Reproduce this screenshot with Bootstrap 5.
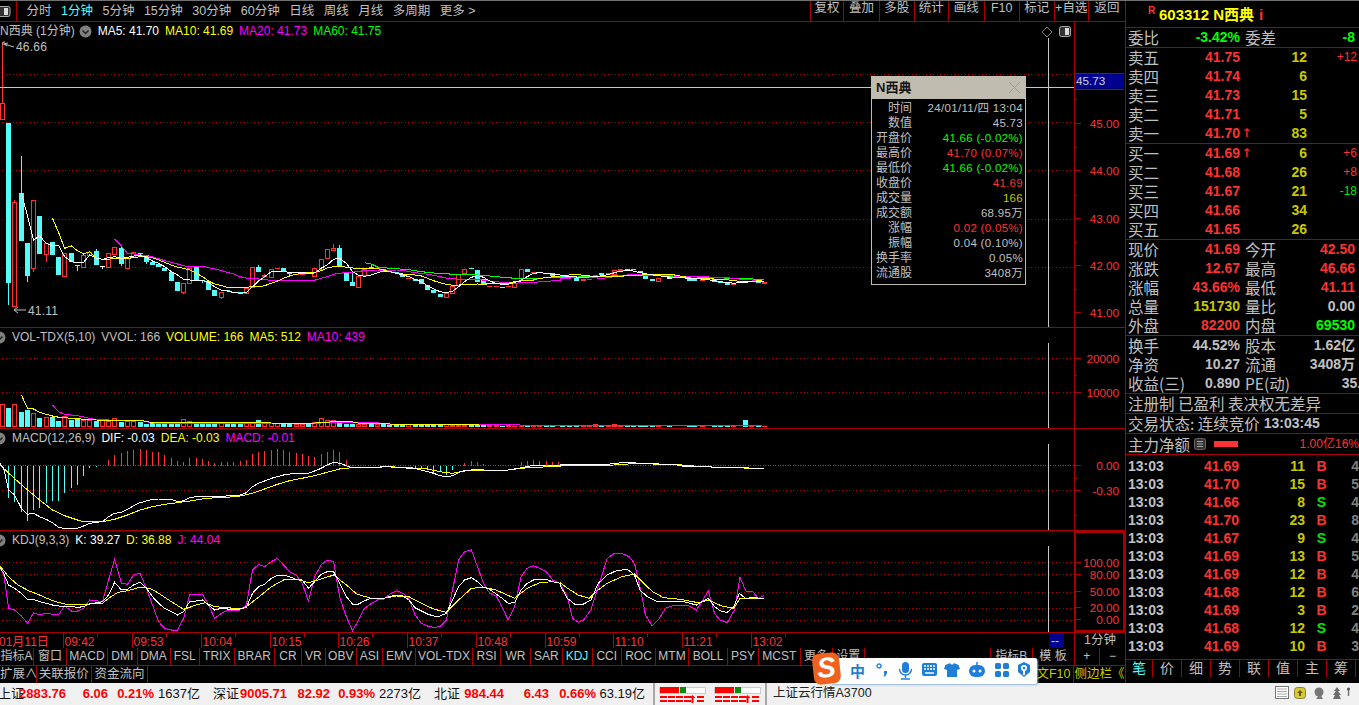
<!DOCTYPE html>
<html lang="zh">
<head>
<meta charset="UTF-8" />
<title>N西典 1分钟</title>
<link href="https://cdn.jsdelivr.net/npm/bootstrap@5.3.3/dist/css/bootstrap.min.css" rel="stylesheet">
<style>
  html, body { height: 100%; overflow: hidden; background: #000; }
  body { font: 12px/1.2 "Liberation Sans", "Noto Sans CJK SC", sans-serif; color: #c0c0c0; }
  :root { --rl: #a80000; --rd: #ff3232; }
  #app { width: 1359px; height: 705px; border-top: 1px solid #707070; overflow: hidden; }
  .left-col { width: 1126px; border-right: 1px solid var(--rl); }
  .right-col { width: 233px; }
  svg { display: block; }
  svg text { font: 12px "Liberation Sans", "Noto Sans CJK SC", sans-serif; fill: #ff3232; }

  .tool-bar { height: 21px; border-bottom: 1px solid var(--rl); font-size: 12.5px; }
  .tool-ico { width: 17px; border-right: 1px solid var(--rl); }
  .tool-left span { margin-left: 9.5px; }
  .tool-left { padding-left: 0; }
  .tool-left .on { color: #54fcfc; }
  .tool-btn { border-left: 1px solid var(--rl); text-align: center; }

  .pan { border-bottom: 1px solid var(--rl); }
  .pan-main { height: 306px; }
  .pan-vol { height: 101px; }
  .pan-macd { height: 102px; }
  .pan-kdj { height: 102px; }
  .pan-time { height: 15px; }
  .plot { width: 1074px; }
  .yaxis { width: 51px; border-left: 1px solid var(--rl); }
  .legend-row { top: 2px; left: 0; gap: 6px; line-height: 15px; white-space: nowrap; }
  .legend-row .y { color: #ffff00; } .legend-row .m { color: #ff00ff; }
  .legend-row .g { color: #00ff00; } .legend-row .w { color: #fff; }
  .legend-lead { gap: 4px; }
  .kdj-box { outline: 2px solid var(--rl); outline-offset: -2px; }
  .cell-1m { width: 51px; border-left: 1px solid var(--rl); text-align: center; line-height: 15px; font-size: 12.5px; }
  .tab-row { height: 18px; border-bottom: 1px solid var(--rl); line-height: 17px; font-size: 12px; }
  .tab-row2 { height: 17px; line-height: 17px; font-size: 12.5px; }
  .tab-cell { border-right: 1px solid var(--rl); text-align: center; white-space: nowrap; flex-shrink: 0; }
  .tab-cell.on { color: #54fcfc; }
  .tab-cell.yel { color: #c8c800; }

  .q-font { font: 15.5px/19px "Noto Sans CJK SC", sans-serif; }
  .q-sec { border-bottom: 1px solid var(--rl); padding-left: 2px; }
  .q-row { height: 19px; white-space: nowrap; }
  .q-lab { width: 34px; flex-shrink: 0; color: #c0c0c0; font: 15.5px/19px "Noto Sans CJK SC", sans-serif; }
  .q-val { font: bold 14px/19px "Liberation Sans", "Noto Sans CJK SC", sans-serif; text-align: right; flex-shrink: 0; }
  .w78 { width: 78px; } .w79 { width: 79px; } .w54 { width: 54px; } .w50 { width: 50px; } .w13 { width: 13px; }
  .gap5 { margin-left: 5px; }
  .q-del { font: 12px/19px "Liberation Sans", sans-serif; text-align: right; flex-shrink: 0; }
  .q-arrow { font: bold 12px/19px "DejaVu Sans", sans-serif; color: #ff2020; text-align: center; }
  .c-red { color: #ff3232; } .c-yel { color: #c8c800; } .c-grn { color: #00e600; } .c-gry { color: #c0c0c0; }
  .c-lgrn { color: #00ff00; } .c-dim { color: #808080; }
  .q-head { height: 27px; font: bold 15px/27px "Liberation Sans", "Noto Sans CJK SC", sans-serif; color: #ffff00; padding-left: 22px; }
  .q-r { font-size: 10px; color: #ff3232; position: relative; top: -4px; width: 11px; }
  .q-i { color: #ff3232; margin-left: 5px; }
  .q-h20 { height: 20px; }
  .q-h21 { height: 21px; }
  .q-flow { line-height: 19px; }
  .tick-box { height: 205px; padding-top: 2px; }
  .tick-row { height: 18px; font: bold 14px/18px "Liberation Sans", sans-serif; white-space: nowrap; }
  .t-time { width: 37px; color: #c0c0c0; }
  .t-price { width: 74px; text-align: right; color: #ff3232; }
  .t-qty { width: 66px; text-align: right; color: #c8c800; }
  .t-bs { width: 17px; margin-left: 8px; text-align: center; }
  .t-n { width: 29px; text-align: right; color: #808080; }
  .tab-q { height: 17px; line-height: 17px; font-size: 14px; }
  .tab-q .tab-cell { width: 29px; }
  .tab-q .tab-cell:first-child { width: 27px; }

  .pop-box { left: 871px; top: 75px; width: 155px; height: 209px; background: #000; border: 1px solid #c0bcb0; }
  .pop-title { height: 22px; background: #c0bcb0; color: #141414; font-weight: bold; font-size: 13px; line-height: 22px; padding-left: 4px; }
  .pop-list { padding-top: 2px; }
  .pop-row { height: 15px; line-height: 15px; white-space: nowrap; padding-right: 2px; }
  .pop-lab { width: 40px; text-align: right; font-size: 12px; color: #c0c0c0; }
  .pop-val { font-size: 11.5px; letter-spacing: .3px; }

  .status-bar { height: 22px; background: #f0f0f0; color: #111; line-height: 21px; white-space: nowrap; }
  .st-cell { flex-shrink: 0; font-size: 13px; }
  .st-red { color: #f00; font-weight: bold; text-align: right; font-size: 13px; }
  .st-sep { border-left: 2px solid #a8a8a8; height: 22px; }
  .st-note { color: #222; font-size: 12.5px; margin-left: 6px; }
  .st-tray { right: 6px; top: 3px; }

  .sg-bar { left: 830px; top: 657px; width: 207px; height: 26px; background: #fff; border-radius: 2px; box-shadow: 1px 1px 2px #8fb7df; }
  .sg-logo { left: 813px; top: 652px; width: 27px; height: 31px; background: #f0611e; border-radius: 7px; transform: rotate(-6deg); color: #fff; font: italic bold 28px/30px "Liberation Sans", sans-serif; text-align: center; }
  .sg-zh { left: 850px; top: 662px; color: #1f7ed8; font: bold 15px/16px "Noto Sans CJK SC", sans-serif; }
  .sg-ico { left: 876px; top: 661px; }
</style>
</head>
<body>
<div id="app" class="position-relative">
  <div class="d-flex">
    <div class="left-col flex-shrink-0">
      <!-- 顶部周期栏 -->
      <div class="tool-bar d-flex">
        <div class="tool-ico flex-shrink-0 d-flex align-items-center">
          <svg width="11" height="11"><rect x="-2" y="0.5" width="12" height="10" rx="2" fill="#333" stroke="#aaa"/><rect x="4" y="2" width="4" height="7" fill="#ddd"/></svg>
        </div>
        <div class="tool-left flex-grow-1 d-flex align-items-center" id="toolLeft"></div>
        <div class="d-flex" id="toolRight"></div>
      </div>

      <!-- 主图 -->
      <div class="pan pan-main d-flex">
        <div class="plot position-relative">
          <svg id="svgMain" width="1074" height="305" viewBox="0 22 1074 305"></svg>
          <div class="legend-row position-absolute d-flex align-items-center">
            <div class="d-flex align-items-center legend-lead">
              <span class="leg-name">N西典 (1分钟)</span>
              <svg width="13" height="13" viewBox="0 0 13 13"><circle cx="6.5" cy="6.5" r="6" fill="#808080"/><path d="M3.5 5.5l3 3 3-3" fill="none" stroke="#222" stroke-width="1.5"/></svg>
            </div>
            <span class="w">MA5: 41.70</span><span class="y">MA10: 41.69</span><span class="m">MA20: 41.73</span><span class="g">MA60: 41.75</span>
          </div>
        </div>
        <svg class="yaxis" id="axMain" width="51" height="305" viewBox="1075 22 51 305"></svg>
      </div>

      <!-- 成交量 -->
      <div class="pan pan-vol d-flex">
        <div class="plot position-relative">
          <svg id="svgVol" width="1074" height="100" viewBox="0 328 1074 100"></svg>
          <div class="legend-row position-absolute d-flex align-items-center">
            <svg width="6" height="13" viewBox="7 0 6 13"><circle cx="6.5" cy="6.5" r="6" fill="#808080"/><path d="M3.5 5.5l3 3 3-3" fill="none" stroke="#222" stroke-width="1.5"/></svg>
            <span>VOL-TDX(5,10)</span><span>VVOL: 166</span><span class="y">VOLUME: 166</span><span class="y">MA5: 512</span><span class="m">MA10: 439</span>
          </div>
        </div>
        <svg class="yaxis" id="axVol" width="51" height="100" viewBox="1075 328 51 100"></svg>
      </div>

      <!-- MACD -->
      <div class="pan pan-macd d-flex">
        <div class="plot position-relative">
          <svg id="svgMacd" width="1074" height="101" viewBox="0 429 1074 101"></svg>
          <div class="legend-row position-absolute d-flex align-items-center">
            <svg width="6" height="13" viewBox="7 0 6 13"><circle cx="6.5" cy="6.5" r="6" fill="#808080"/><path d="M3.5 5.5l3 3 3-3" fill="none" stroke="#222" stroke-width="1.5"/></svg>
            <span>MACD(12,26,9)</span><span class="w">DIF: -0.03</span><span class="y">DEA: -0.03</span><span class="m">MACD: -0.01</span>
          </div>
        </div>
        <svg class="yaxis" id="axMacd" width="51" height="101" viewBox="1075 429 51 101"></svg>
      </div>

      <!-- KDJ -->
      <div class="pan pan-kdj d-flex">
        <div class="plot position-relative">
          <svg id="svgKdj" width="1074" height="101" viewBox="0 531 1074 101"></svg>
          <div class="legend-row position-absolute d-flex align-items-center">
            <svg width="6" height="13" viewBox="7 0 6 13"><circle cx="6.5" cy="6.5" r="6" fill="#808080"/><path d="M3.5 5.5l3 3 3-3" fill="none" stroke="#222" stroke-width="1.5"/></svg>
            <span>KDJ(9,3,3)</span><span class="w">K: 39.27</span><span class="y">D: 36.88</span><span class="m">J: 44.04</span>
          </div>
        </div>
        <svg class="yaxis kdj-box" id="axKdj" width="51" height="101" viewBox="1075 531 51 101"></svg>
      </div>

      <!-- 时间轴 -->
      <div class="pan-time d-flex">
        <svg id="svgTime" width="1074" height="15" viewBox="0 633 1074 15"></svg>
        <div class="cell-1m">1分钟</div>
      </div>

      <div class="tab-row d-flex border-top-0" id="tabsA"></div>
      <div class="tab-row2 d-flex" id="tabsB"></div>
    </div>

    <!-- 右侧盘口 -->
    <div class="right-col flex-shrink-0">
      <div class="q-sec q-head d-flex">
        <span class="q-r">R</span><span>603312 N西典</span><span class="q-i">i</span>
      </div>
      <div class="q-sec q-h20" id="qBi"></div>
      <div class="q-sec" id="qSell"></div>
      <div class="q-sec" id="qBuy"></div>
      <div class="q-sec" id="qQuote"></div>
      <div class="q-sec" id="qFin"></div>
      <div class="q-sec q-h20 q-font">注册制 已盈利 表决权无差异</div>
      <div class="q-sec q-h20 d-flex">
        <span class="q-font">交易状态: 连续竞价</span>
        <span class="q-val ms-1 c-gry">13:03:45</span>
      </div>
      <div class="q-sec q-h21 d-flex align-items-center position-relative">
        <span class="q-font">主力净额</span>
        <svg class="ms-1" width="12" height="12" viewBox="0 0 12 12"><rect x=".5" y=".5" width="11" height="11" rx="2" fill="#333" stroke="#666"/><path d="M3 3.5h6M3 6h6M3 8.5h6" stroke="#aaa"/></svg>
        <svg class="ms-2" width="26" height="6"><rect x="0" width="24" height="6" fill="#ff3232"/></svg>
        <span class="ms-auto c-red q-main-a">1.00亿</span>
        <span class="c-red q-main-b">16%</span>
      </div>
      <div class="q-sec tick-box" id="qTicks"></div>
      <div class="tab-q d-flex" id="tabsQ"></div>
    </div>
  </div>

  <!-- 底部状态栏 -->
  <div class="status-bar d-flex position-relative" id="statusBar"></div>

  <!-- 十字光标数据窗 -->
  <div class="pop-box position-absolute" id="popBox">
    <div class="pop-title d-flex justify-content-between">
      <span>N西典</span>
      <svg class="me-1 mt-1" width="13" height="13"><path d="M1 1l11 11M12 1L1 12" stroke="#a09c92"/></svg>
    </div>
    <div class="pop-list" id="popList"></div>
  </div>

  <!-- 输入法状态条 -->
  <div class="sg-bar position-absolute"></div>
  <div class="sg-logo position-absolute">S</div>
  <div class="sg-zh position-absolute">中</div>
  <svg class="sg-ico position-absolute" width="160" height="18" viewBox="0 0 160 18" fill="#1f7ed8">
    <circle cx="3" cy="4" r="2" fill="none" stroke="#1f7ed8" stroke-width="1.3"/>
    <path d="M8 9h3v2.500l-2 3h-1.500l1-3H8z"/>
    <rect x="26" y="0" width="7" height="11" rx="3.500"/>
    <path d="M23.500 7a6 6 0 0 0 12 0M29.500 13v3M25 17h9" fill="none" stroke="#1f7ed8" stroke-width="1.400"/>
    <rect x="46" y="1" width="15" height="13" rx="2"/>
    <path d="M48 4h2M51 4h2M54 4h2M57 4h2M48 7h2M51 7h2M54 7h2M57 7h2M49 11h9" stroke="#fff" stroke-width="1.300"/>
    <path d="M74 1l-4.500 2-1.500 4 3 1v7h10V8l3-1-1.500-4L78 1c-.5 2-3.500 2-4 0z"/>
    <rect x="93" y="3" width="16" height="12" rx="6"/>
    <path d="M101 3V0" stroke="#1f7ed8" stroke-width="1.500"/>
    <circle cx="98" cy="9" r="1.500" fill="#fff"/><circle cx="104" cy="9" r="1.500" fill="#fff"/>
    <rect x="119" y="1" width="6" height="6" rx="1.500"/><rect x="127" y="1" width="6" height="6" rx="1.500"/>
    <rect x="119" y="9" width="6" height="6" rx="1.500"/><rect x="127" y="9" width="6" height="6" rx="1.500"/>
    <path d="M148 0l6 3v7l-6 5-6-5V3z"/>
    <circle cx="148" cy="6" r="3" fill="#fff"/><path d="M147 7h2v6h-2z" fill="#fff"/><circle cx="148" cy="6" r="1.300"/>
  </svg>
</div>

<script src="https://cdn.jsdelivr.net/npm/bootstrap@5.3.3/dist/js/bootstrap.bundle.min.js"></script>
<script>
  const RED = "#ff3232", CYAN = "#54fcfc", DOT = "#b00000", CROSS = "#c8c8c8";

  // 读图坐标: 左半 2.8 倍, 右半 2.75 倍, 纵向 3 倍
  const xA = x => +(x / 2.8).toFixed(1);
  const xB = x => +(560 + x / 2.75).toFixed(1);

  function pts(a, b, y0) {
    const out = [];
    for (let i = 0; i < a.length; i += 2) out.push(xA(a[i]) + "," + (y0 + a[i + 1] / 3).toFixed(1));
    for (let i = 0; b && i < b.length; i += 2) out.push(xB(b[i]) + "," + (y0 + b[i + 1] / 3).toFixed(1));
    return out.join(" ");
  }
  const line = (p, c, w) => `<polyline points="${p}" fill="none" stroke="${c}" stroke-width="${w || 1}" shape-rendering="crispEdges"/>`;
  const rect = (x, y, w, h, f, s) => `<rect x="${x}" y="${y}" width="${w}" height="${h}" fill="${f}" ${s ? `stroke="${s}"` : ""} shape-rendering="crispEdges"/>`;
  const seg = (x1, y1, x2, y2, c) => `<line x1="${x1}" y1="${y1}" x2="${x2}" y2="${y2}" stroke="${c}" shape-rendering="crispEdges"/>`;
  const dotted = y => `<line x1="2" y1="${y}" x2="1074" y2="${y}" stroke="${DOT}" stroke-dasharray="1 2.500" shape-rendering="crispEdges"/>`;

  // [x, 实体上, 实体下, 上影, 下影, 类型]
  const candles = [
    [7,310,358,125,358,"r"],[24,370,850,370,915,"c"],[41,607,917,600,917,"r"],[60,580,722,468,722,"c"],
    [77,730,827,730,845,"c"],[94,601,803,601,815,"r"],[111,648,762,648,762,"c"],[129,730,762,730,785,"r"],
    [147,727,765,727,765,"c"],[164,772,825,772,825,"c"],[181,760,827,760,827,"r"],[200,758,787,758,787,"c"],
    [217,795,797,795,812,"c"],[234,765,800,765,800,"r"],[251,755,765,755,765,"r"],[270,753,795,748,795,"c"],
    [287,798,800,798,808,"w"],[304,760,800,760,800,"r"],[321,742,762,742,762,"r"],[340,745,793,737,798,"c"],
    [357,775,803,775,803,"r"],[374,757,772,757,772,"r"],[392,758,762,758,766,"c"],[410,765,787,765,792,"c"],
    [427,786,795,786,795,"c"],[444,792,800,792,800,"c"],[461,803,812,803,812,"c"],[480,815,843,815,843,"c"],
    [497,846,872,846,872,"c"],[514,850,875,850,882,"r"],[531,805,848,805,848,"r"],[550,800,842,800,842,"c"],
    [567,840,843,840,850,"c"],[584,845,870,845,870,"c"],[601,870,888,870,888,"c"],[620,877,892,877,897,"r"],
    [637,870,873,870,873,"c"],[654,875,877,875,877,"c"],[672,877,880,877,880,"c"],[690,865,880,865,880,"r"],
    [707,802,862,802,862,"r"],[724,802,815,796,815,"c"],[741,826,830,822,835,"R"],[760,808,830,808,830,"r"],
    [777,803,806,803,806,"R"],[794,805,815,805,815,"c"],[811,818,822,818,827,"c"],[829,822,825,822,825,"R"],
    [846,820,824,820,824,"R"],[864,818,823,818,823,"c"],[881,805,827,805,827,"r"],[899,778,808,778,808,"r"],
    [916,748,775,748,775,"r"],[934,743,751,732,751,"r"],[951,745,798,736,798,"c"],[970,817,843,817,843,"c"],
    [987,847,857,820,857,"c"],[1004,828,860,828,863,"r"],[1021,808,825,808,825,"r"],[1040,800,808,792,808,"c"],
    [1057,803,805,803,805,"R"],[1074,806,812,806,812,"c"],[1091,812,815,812,815,"c"],[1110,815,820,815,820,"c"],
    [1128,822,832,822,832,"c"],[1145,834,838,834,838,"R"],[1162,838,842,838,842,"c"],[1180,838,852,838,852,"c"],
    [1197,855,870,855,870,"c"],[1214,870,878,870,878,"c"],[1232,882,891,882,891,"c"],[1250,880,892,880,892,"r"],
    [1267,857,880,857,880,"r"],[1284,822,855,822,855,"r"],[1301,808,820,808,820,"r"],[1320,805,808,805,808,"c"],
    [1337,810,845,810,845,"c"],[1354,836,855,836,855,"c"],[1371,858,862,858,862,"R"],[1389,858,862,858,862,"R"],
    [1406,860,862,860,862,"c"],[1423,858,861,858,861,"R"],[1441,850,862,850,862,"r"],[1459,808,835,808,835,"r"],
    [1476,806,815,806,815,"c"],[1494,816,820,816,820,"R"],[1511,816,819,816,819,"R"],[1530,818,822,818,822,"c"],
    [1547,820,827,820,827,"c"]
  ];
  const tail = [
    [8,824,832,"c"],[25,827,832,"c"],[45,835,842,"c"],[65,838,842,"R"],[80,836,840,"R"],[98,826,832,"r"],
    [115,820,826,"c"],[132,820,824,"R"],[150,810,822,"r"],[165,807,814,"R"],[185,806,811,"c"],[203,806,811,"c"],
    [220,814,820,"c"],[235,828,836,"c"],[255,838,842,"c"],[270,833,842,"r"],[300,832,836,"w"],[355,834,842,"c"],
    [370,838,842,"c"],[392,838,842,"R"],[425,838,846,"c"],[442,842,850,"c"],[460,848,854,"c"],[477,848,854,"R"],
    [510,845,850,"w"],[527,843,847,"R"],[545,842,848,"c"],[562,846,851,"R"]
  ];

  function body(x, t, b, type) {
    const h = Math.max(b - t, 1);
    if (type === "r") return rect(x - 2, t + .5, 4, h, "#000", RED);
    if (type === "R") return rect(x - 2.5, t, 5, h, RED);
    if (type === "w") return rect(x - 2.5, t, 5, h, "#fff");
    return rect(x - 2.5, t, 5, h, CYAN);
  }

  const ma5a = [60,580,75,640,94,720,111,707,129,730,147,737,165,737,181,770,200,785,217,788,234,787,251,765,270,775,287,778,304,773,321,770,340,775,357,772,374,768,392,766,410,772,427,783,444,790,461,800,480,815,497,825,514,838,531,840,550,840,567,842,584,847,601,860,620,870,637,873,654,877,672,880,690,878,707,860,724,843,741,830,760,815,777,814,794,813,811,818,829,816,846,818,864,820,881,819,899,805,916,795,934,778,951,775,970,790,987,815,1004,826,1021,829,1040,825,1057,818,1074,813,1091,815,1110,820,1128,825,1145,830,1162,838,1180,845,1197,858,1214,866,1232,875,1250,878,1267,874,1284,860,1301,845,1320,832,1337,827,1354,832,1371,843,1389,850,1406,853,1423,853,1441,848,1459,840,1476,830,1494,820,1511,818,1530,820,1547,823,1568,825];
  const ma5b = [0,826,30,830,60,832,100,830,130,824,160,815,190,810,220,818,260,826,310,832,360,835,400,838,440,845,480,850,520,843,560,845];
  const ma10a = [147,655,165,700,181,745,200,738,217,752,234,762,251,755,270,775,287,778,304,778,321,775,340,775,357,775,374,773,392,770,410,770,427,773,444,780,461,787,480,795,497,802,514,805,531,810,550,820,567,830,584,843,601,852,620,857,637,862,654,862,672,862,690,862,707,860,724,860,741,857,760,850,777,843,794,835,811,828,829,823,846,820,864,818,881,817,899,812,916,804,934,800,951,798,970,802,987,804,1004,805,1021,805,1040,804,1057,806,1074,810,1091,815,1110,820,1128,822,1145,823,1162,825,1180,828,1197,835,1214,842,1232,848,1250,853,1267,856,1284,855,1301,853,1320,853,1337,852,1354,853,1371,851,1389,851,1406,851,1423,850,1441,845,1459,843,1476,842,1494,840,1511,835,1530,833,1547,830,1568,828];
  const ma10b = [0,826,50,824,100,830,150,830,200,826,250,824,315,825,365,835,450,838,500,845,555,842];
  const ma20a = [321,718,340,738,357,760,374,762,392,765,410,767,427,771,444,776,461,782,480,787,497,792,514,797,531,800,550,800,567,799,584,803,601,807,620,812,637,817,654,822,672,830,690,834,707,836,724,837,741,838,760,842,777,842,794,842,811,841,829,841,846,841,864,841,881,841,899,835,916,830,934,823,951,820,970,817,987,817,1004,814,1021,812,1040,811,1057,810,1074,810,1091,810,1110,810,1128,811,1145,815,1162,818,1180,820,1197,823,1214,826,1232,830,1250,834,1267,836,1284,838,1301,838,1320,838,1337,838,1354,841,1371,843,1389,845,1406,847,1423,848,1441,850,1459,848,1476,848,1494,848,1511,845,1530,845,1547,842,1568,841];
  const ma20b = [0,836,60,832,120,835,160,828,200,823,245,826,310,828,365,830,450,832,500,838,555,842];
  const ma60a = [1021,788,1040,792,1057,801,1074,803,1091,805,1110,806,1128,808,1145,809,1162,812,1180,815,1197,817,1214,819,1232,820,1250,821,1267,823,1284,823,1301,823,1320,824,1337,825,1354,827,1371,828,1389,829,1406,832,1423,833,1441,835,1459,835,1476,835,1494,835,1511,835,1530,833,1547,832,1568,831];
  const ma60b = [0,832,100,830,200,825,300,828,400,832,500,836,560,838];

  // 主图
  let s = "";
  [74, 122, 170, 219, 267].forEach(y => s += dotted(y + .5));
  candles.forEach(c => {
    const x = xA(c[0]), col = c[5] === "c" ? CYAN : c[5] === "w" ? "#fff" : RED;
    s += seg(x, c[3] / 3, x, c[4] / 3, col);
    s += body(x, c[1] / 3, c[2] / 3, c[5]);
  });
  tail.forEach(c => s += body(xB(c[0]), c[1] / 3, c[2] / 3, c[3]));
  s += line(pts(ma60a, ma60b, 0), "#00ff00");
  s += line(pts(ma20a, ma20b, 0), "#ff00ff");
  s += line(pts(ma10a, ma10b, 0), "#ffff00");
  s += line(pts(ma5a, ma5b, 0), "#ffffff");
  s += seg(0, 87.5, 1074, 87.5, CROSS) + seg(1048.5, 38, 1048.5, 327, CROSS);
  s += `<path d="M3 42h2M3 42v3M4 44l10 3M4 44l4-1M4 44l3 2" stroke="#c0c0c0" fill="none"/><text x="16" y="51" style="fill:#c0c0c0;letter-spacing:.2px">46.66</text>`;
  s += `<path d="M14 310h12M14 310l4-3M14 310l4 3" stroke="#c0c0c0" fill="none"/><text x="28" y="315" style="fill:#c0c0c0;letter-spacing:.2px">41.11</text>`;
  s += `<path d="M1047 27l5 5-5 5-5-5z" fill="none" stroke="#808080"/>`;
  s += `<rect x="1059.500" y="26.500" width="11" height="10" rx="2" fill="#333" stroke="#aaa"/><rect x="1065" y="28" width="4" height="7" fill="#ddd"/>`;
  document.getElementById("svgMain").innerHTML = s;

  // 纵轴
  function axis(id, labels, minors, extra) {
    let a = "";
    labels.forEach(l => {
      a += seg(1075, l[1] + .5, 1081, l[1] + .5, DOT);
      a += `<text x="1120" y="${l[1] + 5}" text-anchor="end">${l[0]}</text>`;
    });
    minors.forEach(y => a += seg(1075, y + .5, 1077, y + .5, DOT));
    document.getElementById(id).innerHTML = a + (extra || "");
  }
  axis("axMain", [["46.00",74],["45.00",122],["44.00",170],["43.00",219],["42.00",267],["41.00",315]], [98,146,195,243,291],
    `<rect x="1075" y="71" width="50" height="16" fill="#000090"/><text x="1076" y="83" style="fill:#d0d0d0">45.73</text>` + seg(1075, 87.5, 1125, 87.5, DOT) + seg(1075, 71.5, 1125, 71.5, DOT));
  axis("axVol", [["20000",358],["10000",392]], [375]);
  axis("axMacd", [["0.00",465],["-0.30",490]], [478,516]);
  axis("axKdj", [["100.00",562],["80.00",574],["50.00",591],["20.00",608],["0.00",620]], []);

  // 成交量
  const volTop = [238,250,238,262,255,265,280,278,275,288,273,285,283,285,285,288,287,288,280,290,290,290,292,296,295,296,296,296,295,283,289,296,296,296,296,293,296,296,296,292,296,285,296,296,296,296,296,297,297,296,292,280,286,286,292,296,297,297,297,296,298,298,300,300,298,299,299,299,298,299,299,299,300,300,300,300,301,301,301,302,302,302,303,303,302,303];
  s = dotted(358.5) + dotted(392.5);
  candles.forEach((c, i) => {
    const x = xA(c[0]), top = (volTop[i] || 303) / 3 + 325, bottom = 426.5;
    s += c[5] === "c" ? rect(x - 2.5, top, 5, bottom - top, CYAN) : rect(x - 2, top, 4, bottom - top, "#000", RED);
  });
  tail.forEach(c => {
    const x = xB(c[0]);
    const h = c[0] === 510 ? 7 : c[0] === 98 || c[0] === 150 ? 3 : 1.5;
    s += rect(x - 2.5, 427 - h, 5, h, c[3] === "c" || c[3] === "w" ? CYAN : RED);
  });
  s += line(pts([147,240,164,260,181,268,200,270,217,272,234,276,251,280,270,284,340,286,400,288,430,294,540,296,600,296,800,296,900,294,1000,293,1060,294,1100,299,1340,299,1568,301], [0,301,555,301], 325), "#ff00ff");
  s += line(pts([60,210,77,250,94,252,111,262,129,268,147,273,165,277,181,278,200,280,217,281,234,283,251,284,270,285,340,287,400,287,430,294,600,293,760,294,860,297,900,292,980,289,1010,296,1070,294,1100,298,1340,298], null, 325), "#ffff00");
  s += seg(1048.5, 343, 1048.5, 428, CROSS);
  document.getElementById("svgVol").innerHTML = s;

  // MACD
  const macdBars = [[7,430],[24,520],[41,530],[60,560],[77,587],[94,555],[111,550],[129,535],[147,528],[164,528],[181,503],[200,490],[217,480],[234,452],[251,428],[270,425],
    [304,405],[321,390],[340,383],[357,378],[374,375],[392,372],[410,375],[427,380],[444,382],[461,390],[480,398],[497,408],[514,410],[531,398],[550,400],[567,403],[584,407],[601,414],[620,412],[637,412],[654,410],[672,407],[690,404],[707,388],[724,380],[741,377],[760,374],[777,372],[794,375],[811,380],[829,383],[846,388],[864,392],[881,395],[899,388],[916,380],[934,375],[951,380],[970,405],[987,420],
    [1162,428],[1180,432],[1197,432],[1214,445],[1232,442],[1250,450],[1267,435],[1301,413],[1320,408],[1337,410],[1354,418],[1459,410],[1476,408],[1494,405],[1511,407],[1530,408],[1547,411],[1565,412]];
  s = `<line x1="0" y1="465.500" x2="1074" y2="465.500" stroke="#e02020" stroke-dasharray="1 1.500" shape-rendering="crispEdges"/>` + dotted(490.5);
  macdBars.forEach(b => {
    const x = xA(b[0]), y = 325 + b[1] / 3;
    s += seg(x, 465.5, x, y, b[1] > 421 ? CYAN : RED);
  });
  s += line(pts([0,420,40,460,77,495,111,525,147,555,181,572,217,585,234,590,251,590,287,590,321,583,357,570,392,555,427,545,461,538,497,533,531,528,567,522,601,518,637,517,672,513,707,505,741,492,777,478,811,467,846,460,881,452,916,442,951,432,987,428,1021,428,1090,425,1145,428,1197,432,1232,440,1267,445,1301,438,1371,437,1406,437,1476,428,1568,424],
    [0,423,60,421,150,420,200,416,310,418,380,424,450,428,560,430], 325), "#ffff00");
  s += line(pts([0,415,10,430,24,495,41,510,60,550,77,568,94,565,111,575,129,583,147,593,165,608,181,610,200,610,217,610,234,603,251,595,270,592,287,590,304,575,321,565,340,562,357,553,374,542,392,533,410,528,427,523,444,522,461,522,480,523,497,530,514,527,531,518,550,515,567,515,584,515,601,515,620,515,637,512,654,510,672,510,690,503,707,485,724,475,741,468,760,460,777,455,794,450,811,447,829,445,846,445,864,445,881,438,899,430,916,420,934,412,951,415,970,422,987,428,1004,428,1090,425,1110,428,1160,430,1197,440,1214,445,1232,452,1250,455,1267,452,1284,443,1301,436,1337,434,1371,436,1406,438,1441,432,1476,425,1494,420,1530,420,1568,422],
    [0,419,40,419,125,419,150,415,190,412,230,416,310,418,340,424,410,425,435,428,520,429,560,430], 325), "#ffffff");
  s += seg(1048.5, 444, 1048.5, 530, CROSS);
  document.getElementById("svgMacd").innerHTML = s;

  // KDJ
  s = "";
  [562, 574, 592, 608, 620].forEach(y => s += dotted(y + .5));
  s += line(pts([0,115,10,130,24,235,41,240,60,258,77,280,94,248,111,255,129,250,147,253,165,253,181,228,200,243,217,243,234,235,251,210,270,212,287,215,304,150,321,88,340,160,357,163,374,135,392,130,410,175,427,225,444,275,461,295,480,300,497,300,514,265,531,193,550,193,567,193,584,225,601,265,620,250,637,240,654,240,672,240,690,225,707,120,724,103,741,110,760,95,777,85,794,105,811,125,829,135,846,160,864,213,881,140,899,105,916,90,934,95,951,200,970,260,987,302,1004,270,1021,235,1040,220,1057,210,1074,208,1091,193,1110,182,1128,190,1145,205,1162,255,1180,280,1197,288,1214,292,1232,290,1250,270,1267,180,1284,90,1301,65,1320,60,1337,110,1354,160,1371,190,1389,197,1406,232,1423,270,1441,230,1459,140,1476,115,1494,107,1511,115,1530,125,1547,150,1568,160],
    [0,160,20,200,35,265,50,277,65,270,85,240,105,170,130,85,150,70,170,70,190,80,205,100,220,170,235,255,253,287,270,270,290,235,310,227,330,225,355,228,375,240,390,215,408,182,425,250,440,270,460,278,480,240,495,142,512,185,530,185,545,205,560,197], 530), "#ff00ff");
  s += line(pts([0,108,24,140,50,165,80,182,111,195,147,212,181,222,217,225,250,222,287,220,304,205,330,187,357,182,392,172,420,175,444,190,480,215,514,238,550,225,575,218,601,230,637,233,672,237,690,230,720,205,760,170,794,150,829,147,864,158,899,147,934,135,970,165,1000,193,1040,205,1074,205,1110,198,1145,200,1180,220,1214,237,1250,247,1284,210,1320,175,1354,172,1389,180,1441,205,1476,175,1511,158,1547,155,1568,160],
    [0,158,25,178,50,195,80,205,105,180,130,160,170,140,205,132,230,160,255,185,285,203,330,208,380,218,408,210,445,228,478,235,495,205,530,205,560,205], 530), "#ffff00");
  s += line(pts([0,112,10,130,24,165,41,175,60,190,77,208,94,208,111,215,129,220,147,225,165,228,181,228,200,230,217,232,234,230,251,222,270,218,287,215,304,195,321,157,340,180,357,178,374,165,392,157,410,175,427,200,444,220,461,235,480,245,497,255,514,245,531,215,550,213,567,210,584,225,601,240,620,235,637,237,654,237,672,237,690,232,707,190,724,170,741,163,760,145,777,135,794,135,811,140,829,148,846,150,864,175,881,155,899,133,916,125,934,125,951,160,970,200,987,222,1004,222,1021,212,1040,205,1057,205,1074,205,1091,200,1110,195,1128,198,1145,210,1162,233,1180,243,1197,252,1214,258,1232,258,1250,250,1267,210,1284,170,1301,150,1320,143,1337,155,1354,172,1371,178,1389,192,1406,205,1423,220,1441,218,1459,180,1476,160,1494,150,1511,148,1530,148,1547,155,1568,160],
    [0,165,20,205,40,222,65,222,85,210,105,160,130,135,155,122,185,118,205,135,220,180,240,200,265,213,300,213,340,215,375,225,408,205,425,230,445,245,460,247,478,230,493,190,510,205,530,203,560,205], 530), "#ffffff");
  s += seg(1048.5, 546, 1048.5, 632, CROSS);
  document.getElementById("svgKdj").innerHTML = s;

  // 时间轴
  s = `<text x="-1" y="646">01月11日</text>`;
  [[63.5,"09:42"],[132.5,"09:53"],[201.5,"10:04"],[270.5,"10:15"],[338.5,"10:26"],[407.5,"10:37"],[476.5,"10:48"],[545.5,"10:59"],[613.5,"11:10"],[682.5,"11:21"],[751.5,"13:02"]].forEach(t => {
    s += seg(t[0], 633, t[0], 648, DOT) + seg(t[0] + 34, 633, t[0] + 34, 637, DOT);
    s += `<text x="${t[0] + 1}" y="646">${t[1]}</text>`;
  });
  s += rect(1049, 633, 15, 15, "#000090") + `<text x="1051" y="645" style="fill:#d0d0d0">--</text>`;
  document.getElementById("svgTime").innerHTML = s;

  // 工具栏
  document.getElementById("toolLeft").innerHTML = ["分时", "1分钟", "5分钟", "15分钟", "30分钟", "60分钟", "日线", "周线", "月线", "多周期", "更多 &gt;"]
    .map((t, i) => `<span class="${i === 1 ? "on" : ""}">${t}</span>`).join("");
  document.getElementById("toolRight").innerHTML = [["复权",33],["叠加",36],["多股",34.5],["统计",34.5],["画线",35.5],["F10",35.5],["标记",34.5],["+自选",34.5],["返回",37]]
    .map(t => `<div class="tool-btn" style="width:${t[1]}px">${t[0]}</div>`).join("");

  // 指标切换
  const tabCell = (t, cls) => `<div class="tab-cell ${cls || ""}" style="width:${t[1]}px">${t[0]}</div>`;
  const tabsA = [["指标A",34],["窗口",33],["MACD",41],["DMI",29.5],["DMA",33],["FSL",29.5],["TRIX",34.500],["BRAR",40.500],["CR",27],["VR",23.500],["OBV",31.500],["ASI",26],["EMV",33],["VOL-TDX",57],["RSI",28],["WR",30],["SAR",31.500],["KDJ",30],["CCI",29.500],["ROC",34],["MTM",33],["BOLL",39],["PSY",31],["MCST",41.500],["更多",32],["设置",32.500],["",126],["指标B",41.500],["模 板",42]];
  document.getElementById("tabsA").innerHTML = tabsA.map(t => tabCell(t, t[0] === "KDJ" ? "on" : "")).join("")
    + `<div class="tab-cell" style="width:25.500px">+</div><div class="tab-cell border-0" style="width:25px">−</div>`;
  document.getElementById("tabsB").innerHTML = [["扩展∧",36.500],["关联报价",55.500],["资金流向",56]].map(t => tabCell(t)).join("")
    + `<div class="flex-grow-1"></div><div class="tab-cell yel" style="width:40px">文F10</div><div class="tab-cell yel border-0" style="width:51px">侧边栏《</div>`;

  // 盘口
  const lab = t => `<span class="q-lab">${t}</span>`;
  const val = (t, c, w) => `<span class="q-val ${w} ${c}">${t}</span>`;
  const del = d => d ? `<span class="q-del w50 ${d[0] === "-" ? "c-grn" : "c-red"}">${d}</span>` : "";
  const depth = r => `<div class="q-row d-flex">${lab(r[0])}${val(r[1], "c-red", "w78")}<span class="q-arrow w13">${r[4] ? "↑" : ""}</span>${val(r[2], "c-yel", "w54")}${del(r[3])}</div>`;
  const pair = r => `<div class="q-row d-flex">${lab(r[0])}${val(r[1], r[2], "w78")}<span class="gap5">${lab(r[3])}</span>${val(r[4], r[5], "w79")}</div>`;

  document.getElementById("qBi").innerHTML = `<div class="q-row d-flex">${lab("委比")}${val("-3.42%", "c-lgrn", "w78")}<span class="gap5">${lab("委差")}</span>${val("-8", "c-lgrn", "w79")}</div>`;
  document.getElementById("qSell").innerHTML = [["卖五","41.75","12","+12"],["卖四","41.74","6"],["卖三","41.73","15"],["卖二","41.71","5"],["卖一","41.70","83","",1]].map(depth).join("") ;
  document.getElementById("qBuy").innerHTML = [["买一","41.69","6","+6",1],["买二","41.68","26","+8"],["买三","41.67","21","-18"],["买四","41.66","34"],["买五","41.65","26"]].map(depth).join("");
  document.getElementById("qQuote").innerHTML = [
    ["现价","41.69","c-red","今开","42.50","c-red"],["涨跌","12.67","c-red","最高","46.66","c-red"],
    ["涨幅","43.66%","c-red","最低","41.11","c-red"],["总量","151730","c-yel","量比","0.00","c-gry"],
    ["外盘","82200","c-red","内盘","69530","c-lgrn"]].map(pair).join("");
  document.getElementById("qFin").innerHTML = [
    ["换手","44.52%","c-gry","股本","1.62亿","c-gry"],["净资","10.27","c-gry","流通","3408万","c-gry"],
    ["收益(三)","0.890","c-gry","PE(动)","35.2","c-gry"]].map(r => pair(r)).join("");

  document.getElementById("qTicks").innerHTML = [["41.69",11,"B",4],["41.70",15,"B",5],["41.66",8,"S",4],["41.70",23,"B",8],["41.67",9,"S",4],["41.69",13,"B",5],["41.69",12,"B",4],["41.68",12,"B",6],["41.69",3,"B",2],["41.68",12,"S",4],["41.69",10,"B",3]]
    .map(r => `<div class="tick-row d-flex"><span class="t-time">13:03</span><span class="t-price">${r[0]}</span><span class="t-qty">${r[1]}</span><span class="t-bs ${r[2] === "B" ? "c-red" : "c-grn"}">${r[2]}</span><span class="t-n">${r[3]}</span></div>`).join("");

  document.getElementById("tabsQ").innerHTML = ["笔","价","细","势","联","值","主","筹"].map((t, i) => `<div class="tab-cell ${i === 0 ? "on" : ""}">${t}</div>`).join("");

  // 数据窗
  document.getElementById("popList").innerHTML = [
    ["时间","24/01/11/四 13:04","c-gry"],["数值","45.73","c-gry"],["开盘价","41.66 (-0.02%)","c-lgrn"],["最高价","41.70 (0.07%)","c-red"],
    ["最低价","41.66 (-0.02%)","c-lgrn"],["收盘价","41.69","c-red"],["成交量","166","c-yel"],["成交额","68.95万","c-gry"],
    ["涨幅","0.02 (0.05%)","c-red"],["振幅","0.04 (0.10%)","c-gry"],["换手率","0.05%","c-gry"],["流通股","3408万","c-gry"]
  ].map(r => `<div class="pop-row d-flex justify-content-between"><span class="pop-lab">${r[0]}</span><span class="pop-val ${r[2]}">${r[1]}</span></div>`).join("");

  // 状态栏
  const miniBars = () => {
    let m = `<svg width="47" height="18" viewBox="0 0 47 18"><rect x=".5" y=".5" width="46" height="6" fill="#fff" stroke="#ccc"/><rect x="1" y="0" width="19" height="6" fill="#f00"/><rect x="21" y="0" width="6" height="6" fill="#0a8a0a"/>`;
    [1, 9, 17, 25, 38].forEach(x => m += `<rect x="${x}" y="9" width="7" height="2" fill="#f00"/><rect x="${x}" y="13" width="7" height="2" fill="#f00"/>`);
    return m + `<path d="M33.500 8l3 3h-2v5h-2v-5h-2z" fill="#f00"/></svg>`;
  };
  const st = [
    ["上证", -2, 21, ""],["2883.76", 0, 46, "st-red"],["6.06", 0, 43, "st-red"],["0.21%", 0, 46, "st-red"],["1637亿", 0, 46, "text-end"],
    ["深证", 13, 27, ""],["9005.71", 0, 44, "st-red"],["82.92", 0, 46, "st-red"],["0.93%", 0, 45, "st-red"],["2273亿", 0, 46, "text-end"],
    ["北证", 13, 27, ""],["984.44", 0, 43, "st-red"],["6.43", 0, 45, "st-red"],["0.66%", 0, 47, "st-red"],["63.19亿", 0, 49, "text-end"]
  ];
  document.getElementById("statusBar").innerHTML = st.map(c => `<span class="st-cell ${c[3]}" style="margin-left:${c[1]}px;width:${c[2]}px">${c[0]}</span>`).join("")
    + `<span class="st-sep ms-2 flex-shrink-0"></span><span class="mx-1 mt-1 flex-shrink-0">${miniBars()}</span><span class="ms-1 mt-1 flex-shrink-0">${miniBars()}</span><span class="st-sep ms-1 flex-shrink-0"></span><span class="st-note">上证云行情A3700</span>`
    + `<svg class="position-absolute st-tray" width="78" height="14" viewBox="0 0 78 14"><rect x=".5" y=".5" width="13" height="12" fill="#fff" stroke="#777"/><path d="M2 3h10M2 5.500h10M2 8h10M2 10.500h10" stroke="#aaa"/><rect x="19.500" y="1.500" width="11" height="11" rx="3" fill="#d8c83c" stroke="#8a8030"/><path d="M25 4l3 3h-2v3h-2V7h-2z" fill="#6a5a10"/><circle cx="44" cy="6" r="4.500" fill="#777"/><path d="M41 13h7l-3-5z" fill="#777"/><path d="M62 1l3 4h-2l3 4h-2l2 4h-8l2-4h-2l3-4h-2z" fill="#6c6c6c"/><path d="M73.500 2v8" stroke="#777" stroke-width="1.500"/><circle cx="73.500" cy="3" r="1.500" fill="#555"/></svg>`;
</script>
</body>
</html>
